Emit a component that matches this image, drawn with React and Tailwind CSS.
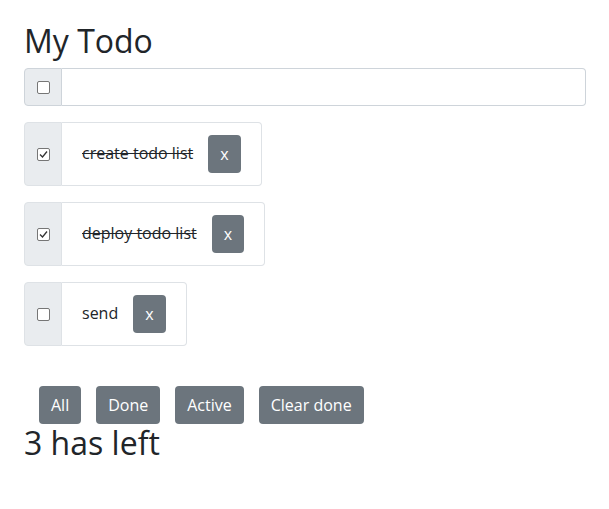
import React, { useState } from 'react';

const CheckMark = ({ checked }) => (
  <span className="w-[13px] h-[13px] border border-[#767676] bg-white rounded-[2px] flex items-center justify-center">
    {checked && (
      <svg width="9" height="9" viewBox="0 0 9 9" fill="none">
        <path d="M1 4.5 L3.5 7 L8 1.5" stroke="#333" strokeWidth="1.3" />
      </svg>
    )}
  </span>
);

const TodoItem = ({ todo, onToggle, onRemove }) => (
  <div className="flex h-[64px] mb-[16px] self-start">
    <div
      className="w-[38px] flex items-center justify-center bg-[#e9ecef] border border-[#dee2e6] rounded-l-[4px] cursor-pointer"
      onClick={onToggle}
    >
      <CheckMark checked={todo.done} />
    </div>
    <div className="flex items-center gap-[15px] pl-[20px] pr-[20px] border border-l-0 border-[#dee2e6] rounded-r-[4px] bg-white">
      <span className={`text-[16px] -mt-[2px] ${todo.done ? 'line-through' : ''}`}>{todo.text}</span>
      <button
        className="h-[38px] px-[12px] bg-[#6c757d] text-white rounded-[4px] text-[16px]"
        onClick={onRemove}
      >
        x
      </button>
    </div>
  </div>
);

export default function App() {
  const [todos, setTodos] = useState([
    { id: 1, text: 'create todo list', done: true },
    { id: 2, text: 'deploy todo list', done: true },
    { id: 3, text: 'send', done: false },
  ]);

  const toggle = (id) =>
    setTodos(todos.map((t) => (t.id === id ? { ...t, done: !t.done } : t)));
  const remove = (id) => setTodos(todos.filter((t) => t.id !== id));

  return (
    <div
      className="min-h-screen bg-white text-[#212529] px-[24px] pt-[22px]"
      style={{ fontFamily: '"Open Sans", "Noto Sans", sans-serif' }}
    >
      <h2 className="text-[32px] leading-[38px] font-medium mb-[8px]">My Todo</h2>

      <div className="flex h-[38px] w-[562px] mb-[16px]">
        <div className="w-[38px] flex items-center justify-center bg-[#e9ecef] border border-[#ced4da] rounded-l-[4px]">
          <CheckMark checked={false} />
        </div>
        <input className="flex-1 border border-l-0 border-[#ced4da] rounded-r-[4px] px-3 outline-none" />
      </div>

      <div className="flex flex-col">
        {todos.map((t) => (
          <TodoItem key={t.id} todo={t} onToggle={() => toggle(t.id)} onRemove={() => remove(t.id)} />
        ))}
      </div>

      <div className="flex gap-[15px] pl-[15px] mt-[24px]">
        {['All', 'Done', 'Active', 'Clear done'].map((label) => (
          <button key={label} className="h-[38px] px-[12px] bg-[#6c757d] text-white rounded-[4px] text-[16px]">
            {label}
          </button>
        ))}
      </div>

      <h2 className="text-[32px] leading-[38px] font-medium">{todos.length} has left</h2>
    </div>
  );
}
